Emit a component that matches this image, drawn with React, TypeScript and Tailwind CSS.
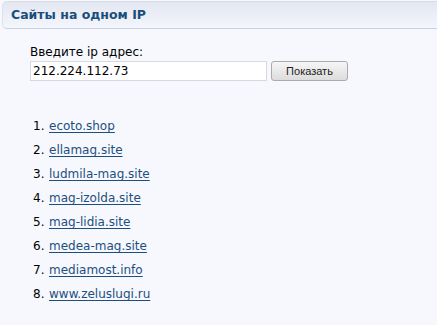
import React, { useState } from 'react';

const sites = [
  'ecoto.shop',
  'ellamag.site',
  'ludmila-mag.site',
  'mag-izolda.site',
  'mag-lidia.site',
  'medea-mag.site',
  'mediamost.info',
  'www.zeluslugi.ru',
];

const App: React.FC = () => {
  const [ip, setIp] = useState('212.224.112.73');

  return (
    <div className="w-[437px] h-[325px] bg-[#f7f8fd] overflow-hidden font-['DejaVu_Sans',Verdana,sans-serif] text-[12px] text-black">
      {/* Header */}
      <div className="ml-[2px] mt-px h-[28px] flex items-center pl-[8px] rounded-tl-[5px] rounded-bl-[5px] border-t border-l border-b border-t-[#d9dce6] border-l-[#dfe2ea] border-b-[#c9cfdd] bg-gradient-to-b from-[#e3e7f1] to-[#f4f6fd]">
        <h2 className="font-bold text-[12.5px] text-[#1a4d7a] leading-none">Сайты на одном IP</h2>
      </div>

      {/* Form */}
      <div className="pl-[30px] pt-[16px]">
        <label className="block leading-[15px] mb-[1px]">Введите ip адрес:</label>
        <div className="flex items-center gap-[4px]">
          <input
            value={ip}
            onChange={(e) => setIp(e.target.value)}
            className="w-[237px] h-[20px] bg-white border border-[#d6d9e0] px-[2px] text-[12px] leading-none outline-none font-['DejaVu_Sans',Verdana,sans-serif]"
          />
          <button className="w-[77px] h-[20px] rounded-[3px] border border-[#a9abb0] bg-gradient-to-b from-[#f6f6f6] to-[#dcdcdc] text-[11px] text-[#222] font-['Liberation_Sans',Arial,sans-serif] leading-none">
            Показать
          </button>
        </div>
      </div>

      {/* List */}
      <ol className="mt-[33px] pl-[33px] space-y-0">
        {sites.map((s, i) => (
          <li key={s} className="h-[24px] leading-[24px] flex">
            <span className="w-[16px]">{i + 1}.</span>
            <a href="#" className="text-[#1c4f7f] underline underline-offset-2">
              {s}
            </a>
          </li>
        ))}
      </ol>
    </div>
  );
};

export default App;
